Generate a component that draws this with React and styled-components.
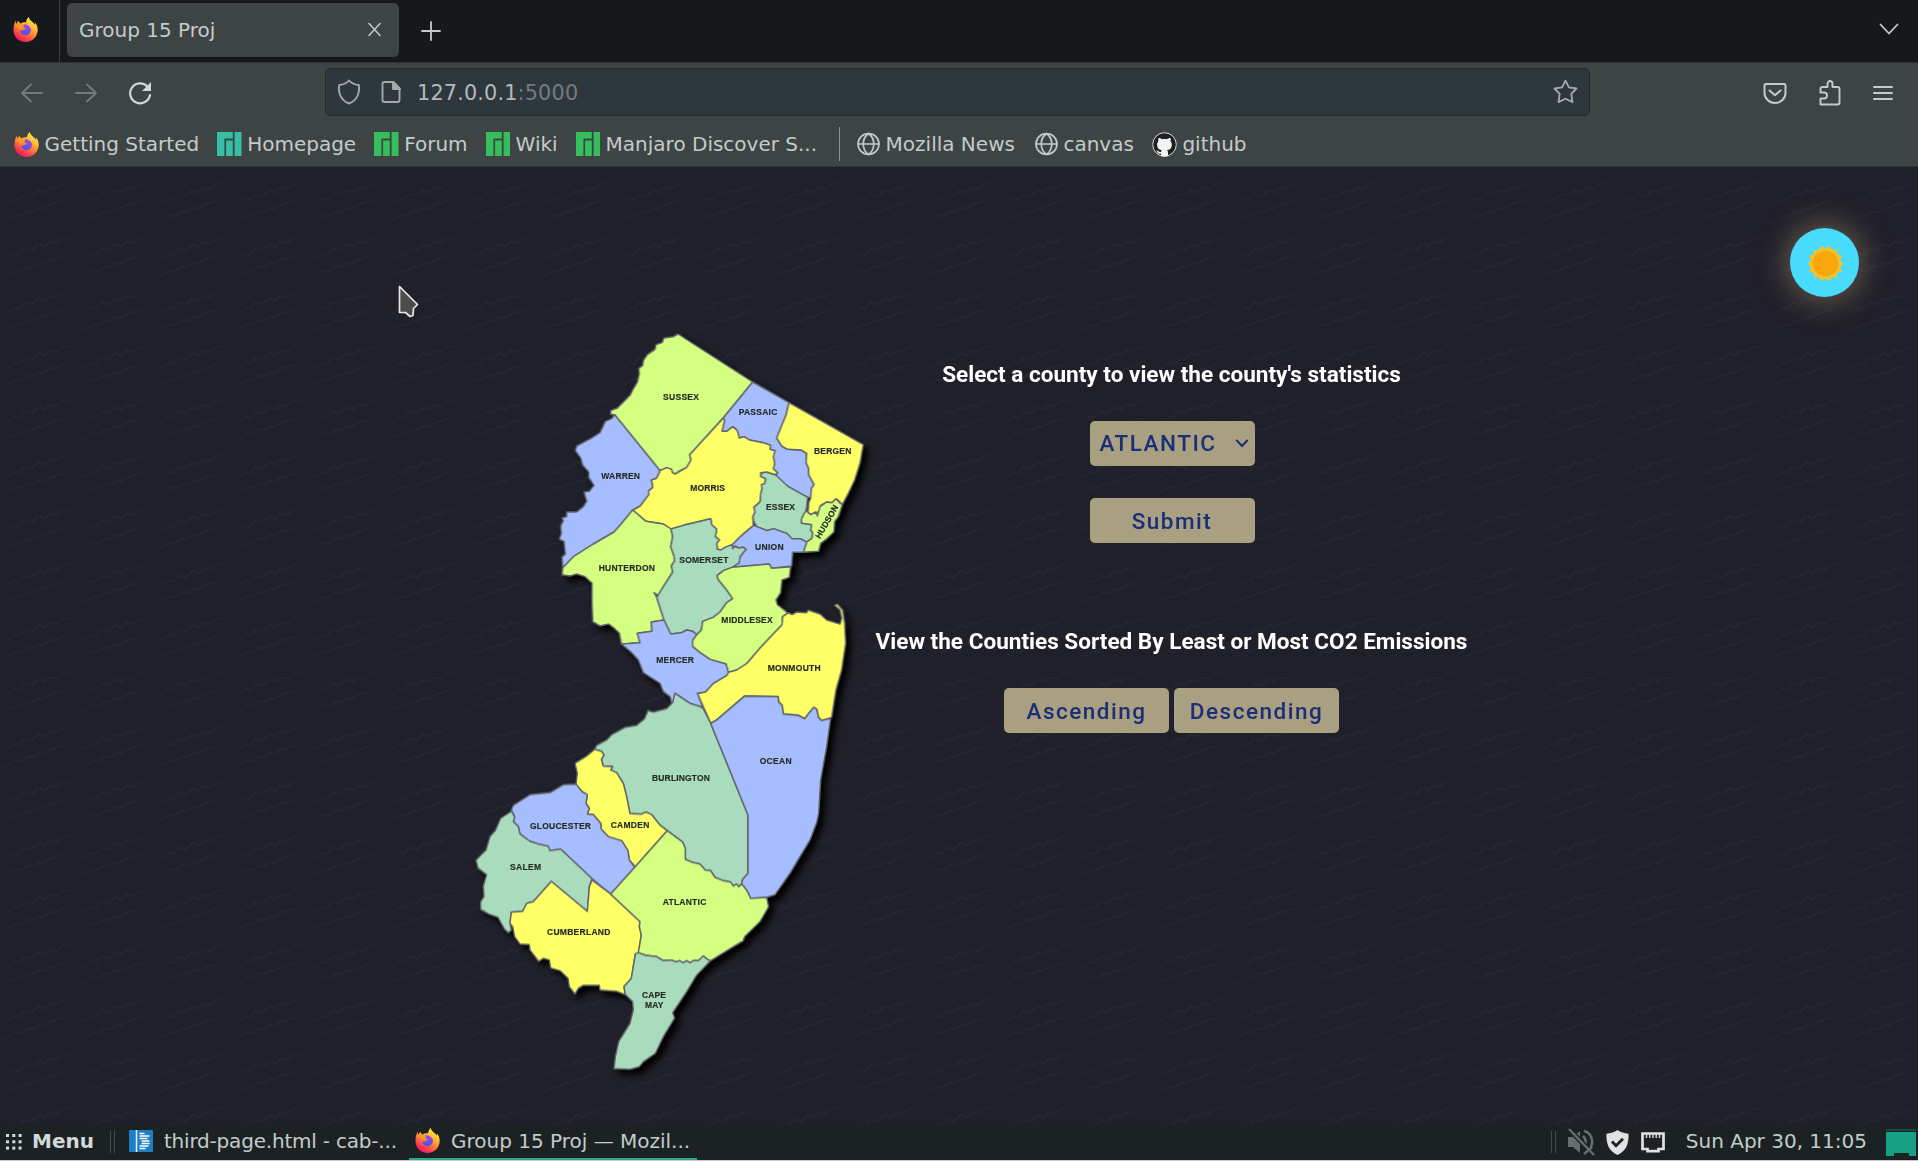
import React from "react";
import styled, { createGlobalStyle } from "styled-components";

const GlobalStyle = createGlobalStyle`
  * { box-sizing: border-box; }
  html, body { margin: 0; padding: 0; background: #20202a; }
  body { width: 1918px; height: 1161px; overflow: hidden; }
`;

const tile = encodeURIComponent(
  `<svg xmlns="http://www.w3.org/2000/svg" width="76.85" height="54.45" viewBox="43 50 230.55 163.35"><defs><linearGradient id="f" gradientUnits="userSpaceOnUse" x1="48" y1="0" x2="268" y2="0"><stop offset="0" stop-color="#262632" stop-opacity=".3"/><stop offset=".3" stop-color="#262632" stop-opacity=".9"/><stop offset=".75" stop-color="#262632"/><stop offset="1" stop-color="#262632" stop-opacity=".35"/></linearGradient></defs><g fill="none" stroke="url(#f)" stroke-width="6" stroke-linejoin="round"><path d="M65 134L85 128L95 117L110 122L124 102L134 104L148 108L165 90L172 90L185 97L200 82L220 86L240 70L268 70"/><path d="M48 192L65 186L75 180L90 174L98 168L118 168L135 156L153 156L170 145L180 148L200 136L245 122"/></g></svg>`
);

const Desktop = styled.div`
  display: flex;
  flex-direction: column;
  width: 1918px;
  height: 1161px;
  font-family: "DejaVu Sans", sans-serif;
  font-size: 20px;
  color: #c3cccb;
  overflow: hidden;
`;

const TabBar = styled.div`
  display: flex;
  align-items: center;
  height: 63px;
  background: #15191b;
  border-bottom: 1px solid #2c3233;
`;

const PinnedTab = styled.div`
  display: flex;
  align-items: center;
  width: 60px;
  height: 62px;
  padding: 0 0 3px 13px;
  border-right: 1px solid #3a4041;
`;

const Tab = styled.div`
  display: flex;
  align-items: center;
  justify-content: space-between;
  width: 332px;
  height: 54px;
  margin: 0 22px 2px 7px;
  padding: 0 17px 1px 12px;
  border-radius: 5px;
  background: #3e4344;
`;

const TabListSlot = styled.div`
  margin: 0 19px 3px auto;
  display: flex;
`;

const NavBar = styled.div`
  display: flex;
  align-items: center;
  height: 57px;
  padding: 2px 22px 0 18px;
  background: #3e4344;
`;

const NavButtons = styled.div`
  display: flex;
  gap: 26px;
  width: 307px;
`;

const UrlBar = styled.div`
  display: flex;
  align-items: center;
  width: 1265px;
  height: 48px;
  margin-bottom: 2px;
  padding: 0 11px 0 10px;
  border: 1px solid #23292b;
  border-radius: 6px;
  background: #2e383c;
  color: #b4b9b9;
`;

const Address = styled.span`
  flex: 1;
  margin-left: 13px;
  padding-top: 2px;
  font-size: 20.8px;
  letter-spacing: 0.15px;
`;

const Port = styled.span`
  color: #747b7d;
`;

const DocSlot = styled.span`
  display: flex;
  margin-left: 16px;
`;

const Tools = styled.div`
  display: flex;
  align-items: center;
  gap: 26px;
  margin-left: auto;
`;

const Bookmarks = styled.div`
  display: flex;
  align-items: center;
  height: 47px;
  padding: 2px 0 0 14px;
  background: #3e4344;
  border-bottom: 1px solid #2d3536;
`;

const Bookmark = styled.div`
  display: flex;
  align-items: center;
  gap: 5.5px;
  margin-right: ${(p) => p.$after || 18}px;
  white-space: nowrap;
`;

const BookmarkDivider = styled.div`
  width: 1px;
  height: 34px;
  margin-right: 17px;
  background: #8c9292;
`;

const Page = styled.main`
  position: relative;
  display: flex;
  height: 958px;
  padding: 153px 0 0 470px;
  background: #20202a url("data:image/svg+xml,${tile}") -2.6px 9.7px / 76.85px 54.45px;
`;

const MapSvg = styled.svg`
  flex: none;
  width: 406px;
  height: 780px;
  overflow: visible;
`;

const Counties = styled.g`
  filter: drop-shadow(15px 15px 9px rgba(0, 0, 0, 0.95));
  stroke: #62656b;
  stroke-width: 4.4;
  stroke-linejoin: round;
`;

const Labels = styled.g`
  font-family: "Liberation Sans", Arial, sans-serif;
  font-weight: 700;
  font-size: 25.5px;
  fill: #262b27;
  stroke: #262b27;
  stroke-width: 0.5;
`;

const Controls = styled.section`
  display: flex;
  flex-direction: column;
  align-items: center;
  width: 591px;
  font-family: Roboto, sans-serif;
`;

const Heading = styled.h3`
  margin: ${(p) => p.$top}px 0 0;
  color: #fff;
  font-size: 22.55px;
  line-height: 28px;
  font-weight: 700;
  white-space: nowrap;
`;

const ButtonRow = styled.div`
  display: flex;
  gap: 5px;
  margin-top: ${(p) => p.$top}px;
  padding-left: ${(p) => p.$inset || 0}px;
`;

const Button = styled.button`
  display: flex;
  align-items: center;
  justify-content: ${(p) => (p.$select ? "space-between" : "center")};
  width: 165px;
  height: 45px;
  padding: ${(p) => (p.$select ? "0 6px 1px 10px" : "1px 0 0")};
  border: 0;
  border-radius: 5px;
  background: #a99f81;
  color: #1b2f78;
  font-family: Roboto, sans-serif;
  font-size: 22.5px;
  font-weight: 500;
  letter-spacing: 1.5px;
`;

const ThemeToggle = styled.button`
  position: absolute;
  left: 1790px;
  top: 61px;
  display: flex;
  align-items: center;
  justify-content: center;
  width: 69px;
  height: 69px;
  padding: 1px 0 0 1px;
  border: 0;
  border-radius: 50%;
  background: #48dbfe;
  box-shadow: 0 0 32px 2px rgba(255, 225, 150, 0.36);
`;

const Pointer = styled.svg`
  position: absolute;
  left: 398px;
  top: 118px;
`;

const Taskbar = styled.footer`
  display: flex;
  align-items: center;
  height: 36px;
  padding: 0 2px 1px 6px;
  background: #1c2224;
  border-bottom: 1px solid #c9cbcb;
  white-space: nowrap;
`;

const MenuLabel = styled.span`
  margin: 0 16px 3px 10px;
  font-weight: 700;
  color: #d3dad9;
`;

const Grip = styled.span`
  width: 5px;
  height: 22px;
  border: solid #454b4d;
  border-width: 0 1px;
`;

const Task = styled.div`
  display: flex;
  align-items: center;
  height: 35px;
  width: ${(p) => p.$width}px;
  margin-left: ${(p) => p.$left}px;
  padding: 0 0 3px 6px;
  gap: ${(p) => p.$gap}px;
  letter-spacing: ${(p) => p.$tracking || 0}px;
  box-shadow: ${(p) => (p.$active ? "inset 0 -2px #2da58d" : "none")};

  svg {
    flex: none;
  }
`;

const Tray = styled.div`
  display: flex;
  align-items: center;
  margin-left: auto;
`;

const TrayIcon = styled.svg`
  flex: none;
  margin-left: ${(p) => p.$left}px;
`;

const Clock = styled.span`
  margin: 0 19px 3px 21px;
`;

const Line = ({ w = 24, h = 24, d, stroke = "#c3cccb", sw = 2, fill = "none", box }) => (
  <svg width={w} height={h} viewBox={box || `0 0 ${w} ${h}`} fill={fill} stroke={stroke} strokeWidth={sw} strokeLinecap="round" strokeLinejoin="round">
    <path d={d} />
  </svg>
);

const Firefox = () => (
  <svg width="25" height="25" viewBox="0 0 25 25">
    <defs>
      <linearGradient id="fx" x1=".8" y1=".05" x2=".25" y2="1">
        <stop offset="0" stopColor="#fff44f" />
        <stop offset=".35" stopColor="#ffb02e" />
        <stop offset=".62" stopColor="#ff6a3d" />
        <stop offset=".85" stopColor="#fb2a55" />
        <stop offset="1" stopColor="#e31587" />
      </linearGradient>
      <linearGradient id="fxcore" x1=".6" y1="0" x2=".4" y2="1">
        <stop offset="0" stopColor="#a347f0" />
        <stop offset="1" stopColor="#4a55d8" />
      </linearGradient>
    </defs>
    <path d="M15.8 0c-2 1.6-2.7 3.7-2.7 5.3C11 5 9 5.600 7.700 6.400 6.200 5.600 5.600 4.800 5.400 3.800 4.500 4.600 4 5.400 3.800 6.600L3 6.200C2.800 4.900 3 4.200 3.200 3.600 1.400 5.400.5 8.600.5 13c0 6.600 5.200 12 12 12 6.700 0 12.200-5.300 12.200-12.200 0-2.900-1.100-5.900-2.900-7.300.3.9.4 1.700.3 2.400C20.300 4.700 16.400 3.800 15.800 0z" fill="url(#fx)" />
    <path d="M8 9.500C9.700 7.200 12.600 6.300 14.600 8.300c3 1.100 3.900 4 3 6.500-1 2.600-3.200 3.500-5.300 3.400-3.100-.2-5.100-2.700-4.900-5.300 1.100.7 2.600.7 3.600-.2.800-.5 1.900-.5 2.200-1.300-1.600-.1-2.600-1.200-2.600-1.700-.900-.4-1.800-.4-2.600-.2z" fill="url(#fxcore)" />
    <path d="M2.600 8.300c1.600-2 4-2.200 6-1 .8.600 2 .6 2.600.9.100 1-1.300 1.500-2.100 2-.7.500-.5 1.300-1.400 2.700" fill="#ff9a20" />
  </svg>
);

const Manjaro = ({ color }) => (
  <svg width="24.500" height="24" viewBox="0 0 24.500 24">
    <path fill={color} d="M0 0h15.800v6.500H7.400V24H0zM9.100 8.600h6.700V24H9.100zM17.600 0h6.900v24h-6.900z" />
  </svg>
);

const Globe = () => (
  <Line w={23} h={24} sw={1.7} d="M11.500 1.500a10.500 10.500 0 1 0 0 21a10.500 10.500 0 1 0 0-21M11.500 1.500c-7 5-7 16 0 21M11.500 1.500c7 5 7 16 0 21M1.500 12h20" />
);

const Github = () => (
  <svg width="25" height="25" viewBox="0 0 25 25">
    <circle cx="12.500" cy="12.500" r="11.800" fill="#1d2124" stroke="#d9dddd" strokeWidth="1" />
    <path fill="#f2f4f4" d="M6.700 6c1.500 0 2.700.7 3.500 1.300 1.500-.4 3.300-.4 4.700 0C15.700 6.700 17 6 18.400 6c.5 1.300.4 2.500.1 3.300 1 1.100 1.400 2.400 1.300 3.900-.2 3.300-2.100 4.500-4.700 4.900.6.700.9 1.500.9 2.500v3.300c-2.300.8-4.800.8-7 0v-2.300c-2.800.6-3.300-1-4.300-2.300-.5-.5-.1-.9.500-.7 1.300.5 1.500 1.800 3.800 1.300.1-.7.400-1.300.8-1.800-2.700-.4-4.500-1.700-4.700-4.900-.1-1.500.4-2.800 1.300-3.900-.3-.8-.3-2.100.3-3.300z" />
  </svg>
);

const sunPoints = Array.from({ length: 28 }, (_, i) => {
  const r = i % 2 ? 15 : 18.2;
  const a = (i * Math.PI) / 14;
  return `${(18.5 + r * Math.cos(a)).toFixed(2)},${(18.5 + r * Math.sin(a)).toFixed(2)}`;
}).join(" ");

const C = { lime: "#d4ff80", blue: "#a6bdff", yellow: "#ffff66", green: "#a9dcbd" };

const north = [
  [C.lime, "414,42 638,186 551,292 449,404 453,420 440,442 420,452 405,462 397,458 395,448 380,443 360,452 224,284 212,283 212,272 232,264 250,246 270,226 278,210 292,186 298,160 296,146 308,136 310,122 322,104 345,88 348,74 366,68 372,54 400,50"],
  [C.blue, "638,186 747,248 738,285 710,354 725,378 742,388 783,390 800,400 798,428 806,446 806,464 822,494 814,506 812,534 803,532 745,500 708,474 712,458 700,446 704,430 700,410 705,392 690,388 692,376 670,368 628,360 612,350 598,354 592,332 578,320 560,334 546,334 554,300 548,296"],
  [C.yellow, "747,248 970,374 960,430 944,480 925,520 907,554 896,542 888,536 876,548 860,546 842,556 832,588 828,576 812,584 804,576 806,548 812,534 814,506 822,494 806,464 806,446 798,428 800,400 783,390 742,388 725,378 710,354 738,285"],
  [C.lime, "798,572 812,584 828,576 832,588 840,560 860,546 876,548 888,536 900,550 907,554 895,590 884,605 882,635 862,655 842,670 836,694 790,697 800,666 815,655 818,640 812,630 814,614 784,610 784,598 790,584"],
  [C.green, "665,458 680,456 708,466 745,500 803,532 800,560 798,572 790,584 784,598 784,610 814,614 812,630 818,640 815,655 800,666 780,656 756,656 740,640 700,626 682,632 650,620 640,602 638,590 645,576 641,562 660,545 662,520 666,505 664,494 674,490 676,476 662,470"],
  [C.blue, "640,616 650,620 682,632 700,626 740,640 756,656 780,656 800,666 790,697 758,697 755,738 695,745 688,732 576,742 598,728 600,710 618,688 610,682 595,684 585,678 578,686 576,674 600,650"],
  [C.yellow, "548,296 554,300 546,334 560,334 578,320 592,332 598,354 612,350 628,360 670,368 692,376 690,388 705,392 700,410 704,430 700,446 712,458 706,464 680,456 662,458 662,470 676,476 674,490 664,494 666,505 662,520 660,545 641,562 645,576 638,590 640,616 600,650 576,674 555,682 543,690 532,688 530,670 538,660 526,650 530,628 515,614 512,596 430,616 393,627 370,612 318,604 278,570 300,558 326,524 326,512 338,502 334,480 350,474 360,452 380,443 395,448 397,458 405,462 440,442 453,420 449,404"],
  [C.blue, "224,284 360,452 350,474 334,480 338,502 326,512 326,524 300,558 278,570 240,616 222,636 160,672 100,710 68,744 66,712 76,702 72,664 58,658 64,640 62,618 70,602 66,594 80,590 80,576 110,576 130,560 140,544 132,516 148,514 162,496 146,472 146,456 128,436 122,414 106,392 110,378 140,362 155,354 180,338 196,304 215,296"],
  [C.lime, "278,570 318,604 370,612 393,627 398,650 392,680 402,708 404,722 394,738 398,756 370,800 354,826 342,818 350,832 372,900 334,906 336,934 292,940 300,968 244,972 238,940 224,926 206,912 180,918 158,905 156,850 156,790 135,770 110,762 90,768 66,764 68,744 100,710 160,672 222,636 240,616"],
  [C.green, "393,627 430,616 512,596 515,614 530,628 526,650 538,660 530,670 532,688 543,690 555,682 576,674 578,686 585,678 595,684 610,682 618,688 600,710 598,728 576,742 550,752 532,766 534,778 560,810 578,836 560,848 540,876 520,892 488,904 484,930 470,944 458,934 440,930 425,938 392,942 372,900 350,832 354,826 370,800 398,756 394,738 404,722 402,708 392,680 398,650"],
  [C.lime, "576,742 688,732 695,745 752,740 748,772 726,780 722,818 708,840 712,854 738,874 742,880 728,890 726,914 660,984 625,1025 618,1032 590,1050 565,1057 558,1032 510,1018 480,998 458,980 458,960 470,944 484,930 488,904 520,892 540,876 560,848 578,836 560,810 534,778 532,766 550,752"],
  [C.yellow, "726,914 728,890 745,878 756,884 770,876 800,878 804,870 840,882 860,900 900,912 905,895 900,870 884,856 892,852 908,870 914,910 917,970 905,1050 888,1110 880,1160 875,1192 845,1202 835,1192 830,1168 822,1162 808,1178 794,1196 775,1186 730,1182 726,1156 716,1146 714,1130 614,1128 530,1200 512,1210 472,1120 496,1116 520,1090 560,1066 565,1057 590,1050 618,1032 625,1025 660,984"],
  [C.blue, "244,972 300,968 292,940 336,934 334,906 372,900 392,942 425,938 440,930 458,934 470,944 458,960 458,980 480,998 510,1018 558,1032 565,1057 560,1066 520,1090 496,1116 472,1120 488,1162 450,1150 420,1130 405,1120 402,1145 395,1148 390,1130 370,1115 360,1090 310,1058 295,1020 275,998"],
];

const south = [
  [C.green, "615,160 630,170 660,190 692,200 700,206 722,250 834,525 834,700 818,718 815,732 806,740 800,732 790,738 782,726 760,722 735,712 722,692 706,690 690,672 665,666 646,658 646,625 638,606 592,572 570,555 545,524 528,516 515,522 480,521 470,470 460,430 440,398 422,390 428,380 400,378 394,358 402,345 395,334 374,328 380,316 410,300 425,284 465,262 500,256 524,236 534,212 550,216 590,206 608,188"],
  [C.blue, "722,250 740,240 824,168 924,170 926,186 936,196 940,222 985,226 1004,236 1018,218 1032,202 1040,208 1045,232 1055,242 1082,235 1070,320 1052,420 1046,520 1040,548 1020,600 960,700 915,764 890,772 842,775 830,750 815,732 818,718 834,700 834,525"],
  [C.yellow, "374,328 395,334 402,345 394,358 400,378 428,380 422,390 440,398 460,430 470,470 480,521 515,522 528,516 545,524 570,555 592,572 496,680 478,660 474,632 455,602 415,590 394,568 392,550 370,524 352,522 358,505 348,490 352,464 335,454 318,432 322,400 315,370 350,348"],
  [C.blue, "318,432 335,454 352,464 348,490 358,505 352,522 370,524 392,550 394,568 415,590 455,602 474,632 478,660 494,682 422,762 366,716 272,627 240,632 234,618 205,612 180,604 150,582 145,560 130,545 134,530 124,510 130,496 180,464 240,458 280,434"],
  [C.green, "124,514 134,530 130,545 145,560 150,582 180,604 205,612 234,618 240,632 272,627 366,716 358,740 352,814 244,724 190,785 170,790 158,814 124,816 120,850 124,870 116,878 104,868 84,832 56,822 32,808 32,785 42,770 40,738 50,704 24,684 18,660 48,630 60,590 76,572 92,535"],
  [C.yellow, "366,720 422,762 510,845 508,860 514,885 505,940 496,942 484,1015 462,1040 466,1064 440,1054 390,1050 388,1036 340,1036 325,1045 315,1062 298,1040 294,1015 270,992 242,984 238,960 220,955 206,964 180,930 178,914 150,912 134,890 128,860 120,850 124,816 158,814 170,790 190,785 244,724 352,814 358,740"],
  [C.lime, "592,572 638,606 646,625 646,658 665,666 690,672 706,690 722,692 735,712 760,722 782,726 790,738 800,732 806,740 815,732 830,750 842,775 890,772 896,800 870,845 824,890 820,902 780,926 722,962 712,958 700,948 685,962 670,962 660,968 650,962 640,968 628,962 618,966 605,960 580,962 560,950 528,946 505,938 514,885 508,860 510,845 422,762 496,680"],
  [C.green, "505,938 528,946 560,950 580,962 605,960 618,966 628,962 640,968 650,962 660,968 670,962 685,962 700,948 712,958 722,962 680,1005 650,1055 608,1118 614,1134 580,1190 556,1240 520,1265 508,1280 480,1288 432,1286 436,1250 446,1205 480,1150 490,1110 488,1085 466,1064 462,1040 484,1015 496,942"],
];

const northLabels = [
  ["SUSSEX", 369, 477, 240], ["PASSAIC", 596, 712, 284], ["BERGEN", 822, 934, 402], ["WARREN", 184, 300, 477],
  ["MORRIS", 451, 555, 513], ["ESSEX", 678, 765, 569], ["UNION", 645, 731, 690], ["SOMERSET", 418, 565, 729],
  ["HUNTERDON", 176, 345, 754], ["MIDDLESEX", 544, 698, 909],
];
const southLabels = [
  ["MERCER", 559, 672, 70], ["MONMOUTH", 893, 1052, 93], ["OCEAN", 869, 965, 371], ["BURLINGTON", 546, 720, 422],
  ["CAMDEN", 422, 538, 564], ["GLOUCESTER", 180, 363, 568], ["SALEM", 120, 213, 689], ["ATLANTIC", 578, 709, 795],
  ["CUMBERLAND", 231, 421, 885], ["CAPE", 516, 588, 1075], ["MAY", 525, 580, 1103],
];

const Names = ({ items }) =>
  items.map(([name, from, to, y]) => (
    <text key={name} x={from} y={y} textLength={to - from}>{name}</text>
  ));
const Shapes = ({ items }) => items.map(([fill, points]) => <polygon key={points} fill={fill} points={points} />);

const SOUTH = "translate(-210 960)";

const CountyMap = () => (
  <MapSvg viewBox="-210 0 1218 2340">
    <Counties>
      <Shapes items={north} />
      <g transform={SOUTH}><Shapes items={south} /></g>
    </Counties>
    <Labels>
      <Names items={northLabels} />
      <text transform="translate(840 658) rotate(-60)" x="0" y="0" textLength="112">HUDSON</text>
      <g transform={SOUTH}><Names items={southLabels} /></g>
    </Labels>
  </MapSvg>
);

export default function App() {
  const green = "#35bf5c";
  return (
    <Desktop>
      <GlobalStyle />
      <TabBar>
        <PinnedTab><Firefox /></PinnedTab>
        <Tab>
          <span>Group 15 Proj</span>
          <Line w={15} h={15} sw={1.5} d="M2 1.500l11 12M13 1.500l-11 12" />
        </Tab>
        <Line w={20} h={21} sw={1.8} d="M10 1v18M1 10h18" />
        <TabListSlot><Line w={20} h={13} sw={1.8} d="M1.500 1.500l8.500 9l8.500-9" /></TabListSlot>
      </TabBar>
      <NavBar>
        <NavButtons>
          <Line w={28} h={24} sw={1.8} stroke="#757b7b" d="M24 12H4M13 3.500L4 12l9 8.500" />
          <Line w={28} h={24} sw={1.8} stroke="#757b7b" d="M4 12h20M15 3.500l9 8.500-9 8.500" />
          <svg width="28" height="24" viewBox="0 0 28 24" fill="none" stroke="#d0d7d6" strokeWidth="2.200" strokeLinecap="round">
            <path d="M21.500 5.500A10 10 0 1 0 24 14" />
            <path d="M25 1v9h-9z" fill="#d0d7d6" stroke="none" />
          </svg>
        </NavButtons>
        <UrlBar>
          <Line w={26} h={26} sw={1.9} stroke="#a4a9aa" d="M13 1.500C15 4 19 5.600 22.800 6C24 14 21 21.500 13 24.500C5 21.500 2 14 3.200 6C7 5.600 11 4 13 1.500z" />
          <DocSlot>
            <svg width="26" height="24" viewBox="0 0 26 24" fill="none" stroke="#a4a9aa" strokeWidth="1.900" strokeLinejoin="round">
              <path d="M6.500 2h9l6 6.500v11.500a2 2 0 0 1-2 2h-13a2 2 0 0 1-2-2v-16a2 2 0 0 1 2-2z" />
              <path d="M15 2v7h7z" fill="#a4a9aa" />
            </svg>
          </DocSlot>
          <Address>127.0.0.1<Port>:5000</Port></Address>
          <Line w={25} h={25} sw={1.8} stroke="#a4a9aa" d="M12.500 1.700l3.400 6.600 7.600 1.200-5.200 5.300 1.200 8.300-7-3.400-7 3.400 1.200-8.300-5.200-5.300 7.600-1.200z" />
        </UrlBar>
        <Tools>
          <Line w={30} h={24} sw={2} d="M6 3h18a1.500 1.500 0 0 1 1.500 1.500v7.500a10.500 10 0 0 1-21 0V4.500A1.500 1.500 0 0 1 6 3zM9.500 9.500l5.500 4.800 5.500-4.800" />
          <Line w={28} h={28} sw={1.9} d="M4.500 25.500v-6h3.500a3 3 0 0 0 0-6H4.500V10a2 2 0 0 1 2-2h5V5a2.300 2.800 0 0 1 5 0v3h5a2 2 0 0 1 2 2v13.500a2 2 0 0 1-2 2z" />
          <Line w={26} h={20} sw={2} d="M4 4h18M4 10h18M4 16h18" />
        </Tools>
      </NavBar>
      <Bookmarks>
        <Bookmark><Firefox />Getting Started</Bookmark>
        <Bookmark><Manjaro color="#35bfa4" />Homepage</Bookmark>
        <Bookmark><Manjaro color={green} />Forum</Bookmark>
        <Bookmark><Manjaro color={green} />Wiki</Bookmark>
        <Bookmark $after={22}><Manjaro color={green} />Manjaro Discover S...</Bookmark>
        <BookmarkDivider />
        <Bookmark $after={20}><Globe />Mozilla News</Bookmark>
        <Bookmark><Globe />canvas</Bookmark>
        <Bookmark><Github />github</Bookmark>
      </Bookmarks>
      <Page>
        <CountyMap />
        <Controls>
          <Heading $top={41}>Select a county to view the county's statistics</Heading>
          <ButtonRow $top={32} $inset={1}>
            <Button $select>
              ATLANTIC
              <Line w={14} h={8} sw={2} stroke="#1b2f78" d="M1.800 1.500l5.200 5.500 5.200-5.500" />
            </Button>
          </ButtonRow>
          <ButtonRow $top={32} $inset={1}><Button>Submit</Button></ButtonRow>
          <Heading $top={85}>View the Counties Sorted By Least or Most CO2 Emissions</Heading>
          <ButtonRow $top={32}>
            <Button>Ascending</Button>
            <Button>Descending</Button>
          </ButtonRow>
        </Controls>
        <ThemeToggle>
          <svg width="37" height="37" viewBox="0 0 37 37">
            <polygon points={sunPoints} fill="#f0c22e" />
            <circle cx="18.500" cy="18.500" r="12.800" fill="#f9a60a" />
          </svg>
        </ThemeToggle>
        <Pointer width="22" height="34" viewBox="0 0 22 34">
          <path d="M1.500 1.500V27.500H7.500L12 31.500L15 30.500L15.500 23.500L19.500 19.500z" fill="#4c4c4c" stroke="#e6e6e6" strokeWidth="1.700" strokeLinejoin="round" />
        </Pointer>
      </Page>
      <Taskbar>
        <svg width="16" height="16" viewBox="0 0 16 16" fill="#d3dad9">
          {[0, 6.3, 12.6].map((y) => [0, 6.3, 12.6].map((x) => <rect key={`${x}-${y}`} x={x} y={y} width="3" height="3" />))}
        </svg>
        <MenuLabel>Menu</MenuLabel>
        <Grip />
        <Task $left={8} $width={273} $gap={11} $tracking={-0.2}>
          <svg width="24" height="22" viewBox="0 0 24 22">
            <rect width="24" height="22" rx="1" fill="#1f7fc4" />
            <path d="M7.500 0v22" stroke="#e6f1f8" strokeWidth="1.500" />
            <path d="M10.500 3.500h5M10.500 6h10M10.500 8.500h8M12.500 11h8M12.500 13.500h8M10.500 16h9M10.500 18.500h6" stroke="#fff" strokeWidth="1.400" />
          </svg>
          third-page.html - cab-...
        </Task>
        <Task $left={13} $width={288} $gap={11} $active>
          <Firefox />
          Group 15 Proj — Mozil...
        </Task>
        <Tray>
          <Grip />
          <TrayIcon $left={11} width="28" height="28" viewBox="0 0 28 28" fill="none" stroke="#686d6e" strokeWidth="2.500">
            <path d="M1 9h5l7-6v22l-7-6H1z" fill="#686d6e" stroke="none" />
            <path d="M16 8q5 5 1 11M17 3c8 2 10 11 6 18" />
            <path d="M2 1l25 26" stroke="#1c2224" strokeWidth="5" />
            <path d="M2 1l25 26M17 26l8-7" />
          </TrayIcon>
          <TrayIcon $left={11} width="23" height="25" viewBox="0 0 23 25">
            <path d="M11.500 0c3 2.200 7 3.500 11 3.700C23 13 20.500 21 11.500 25C2.500 21 0 13 .5 3.700C4.500 3.500 8.500 2.200 11.500 0z" fill="#e0e2e2" />
            <path d="M6 11.500l4 4.200 7-7" fill="none" stroke="#1c2224" strokeWidth="2.800" />
          </TrayIcon>
          <TrayIcon $left={12} width="24" height="21" viewBox="0 0 24 21">
            <path d="M1.500 1.500h21v15.500h-5v2.200h-11V17h-5z" fill="#1c2224" stroke="#e0e2e2" strokeWidth="2.700" />
            <path d="M5.500 1v5M8.800 1v5M12 1v5M15.200 1v5M18.500 1v5" stroke="#e0e2e2" strokeWidth="1.400" />
          </TrayIcon>
          <Clock>Sun Apr 30, 11:05</Clock>
          <svg width="30" height="27" viewBox="0 0 30 27">
            <rect width="30" height="2" fill="#0f4f43" />
            <path d="M0 3h30v24h-7v-3H8v3H0z" fill="#17a086" />
          </svg>
        </Tray>
      </Taskbar>
    </Desktop>
  );
}
